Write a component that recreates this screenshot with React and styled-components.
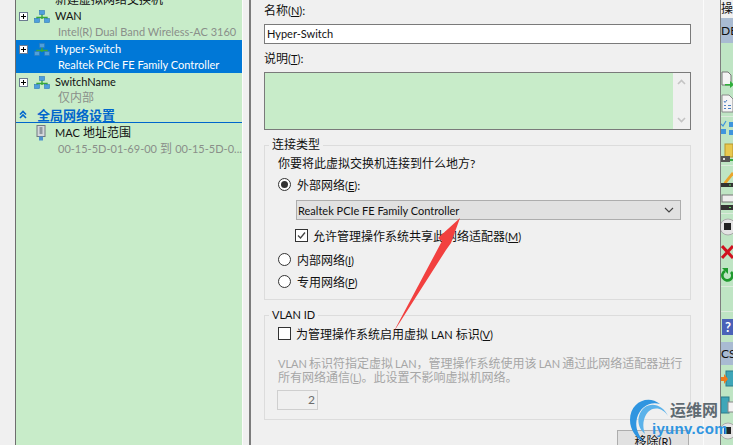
import React from 'react';
import styled, { createGlobalStyle } from 'styled-components';

const GlobalStyle = createGlobalStyle`
    html, body {
        margin: 0;
        padding: 0;
        height: 100%;
        overflow: hidden;
        background: #f0f0f0;
    }
    * {
        box-sizing: border-box;
    }
    body {
        font-family: Lato, "Noto Sans CJK SC", sans-serif;
        font-size: 12px;
        color: #111;
    }
`;

const Page = styled.div`
    position: relative;
    display: flex;
    width: 733px;
    height: 445px;
    overflow: hidden;
    background: #f0f0f0;
`;

const Lat = styled.span`
    font-size: 11px;
`;

const LeftGutter = styled.div`
    width: 15px;
    flex: none;
`;

const Tree = styled.div`
    width: 228px;
    flex: none;
    overflow: hidden;
    background: #c8ecc9;
    border-left: 1px solid #6e6e6e;
    border-right: 1px solid #fbfbfb;
`;

const TreeTop = styled.div`
    display: flex;
    align-items: center;
    height: 14px;
    margin-top: -7px;
    padding-left: 39px;
    line-height: 14px;
`;

const TreeRow = styled.div`
    height: 33px;
    padding-top: 1px;
    color: ${p => (p.$selected ? '#fff' : '#111')};
    background: ${p => (p.$selected ? '#0078d7' : 'transparent')};
`;

const RowTitle = styled.div`
    display: flex;
    align-items: center;
    height: 16px;
    line-height: 16px;
`;

const PlusBox = styled.span`
    position: relative;
    width: 9px;
    height: 9px;
    margin-left: 3px;
    flex: none;
    background: #fff;
    border: 1px solid #6b7a90;
    &::before {
        content: '';
        position: absolute;
        left: 1px;
        top: 3px;
        width: 5px;
        height: 1px;
        background: #000;
    }
    &::after {
        content: '';
        position: absolute;
        left: 3px;
        top: 1px;
        width: 1px;
        height: 5px;
        background: #000;
    }
`;

const TitleIcon = styled.svg`
    width: 16px;
    height: 13px;
    margin-left: 6px;
    margin-right: 5px;
    flex: none;
`;

const RowSub = styled.div`
    height: 15px;
    padding-left: 42px;
    line-height: 15px;
    white-space: nowrap;
    color: ${p => (p.$selected ? '#fff' : '#8a8f8a')};
`;

const SectionHeader = styled.div`
    display: flex;
    align-items: center;
    height: 17px;
    padding-left: 3px;
    font-size: 13px;
    font-weight: 700;
    color: #0066cc;
    border-bottom: 1px solid #0066cc;
`;

const SectionText = styled.span`
    margin-left: 10px;
`;

const MacRow = styled.div`
    padding-top: 2px;
`;

const MacIcon = styled.svg`
    width: 10px;
    height: 16px;
    margin-left: 20px;
    margin-right: 9px;
    flex: none;
`;

const Gap = styled.div`
    width: 6px;
    flex: none;
`;

const Panel = styled.div`
    width: 455px;
    flex: none;
    overflow: hidden;
    padding: 3px 12px 0 13px;
    border-left: 2px solid #7c7c7c;
    border-right: 1px solid #fbfbfb;
`;

const FieldLabel = styled.div`
    height: 16px;
    line-height: 16px;
    margin-top: ${p => p.$mt || 0}px;
`;

const TextInput = styled.div`
    height: 20px;
    margin-top: 5px;
    padding-left: 2px;
    font-size: 11px;
    line-height: 18px;
    background: #fff;
    border: 1px solid #7a7a7a;
`;

const Description = styled.div`
    display: flex;
    height: 58px;
    margin-top: 5px;
    background: #fff;
    border: 1px solid #7a7a7a;
`;

const DescriptionBody = styled.div`
    flex: 1;
    background: #c8ecc9;
`;

const ScrollBar = styled.div`
    display: flex;
    flex-direction: column;
    justify-content: space-between;
    align-items: center;
    width: 17px;
    padding: 6px 0;
    flex: none;
    background: #f0f0f0;
`;

const Group = styled.fieldset`
    height: ${p => p.$h}px;
    margin: 7px 0 0;
    padding: 0 0 0 13px;
    min-width: 0;
    border: 1px solid #dcdcdc;
`;

const GroupLegend = styled.legend`
    margin-left: -9px;
    padding: 0 3px;
    height: 16px;
    line-height: 16px;
`;

const Line = styled.div`
    display: flex;
    align-items: center;
    height: 16px;
    margin-top: ${p => p.$mt || 0}px;
    margin-left: ${p => p.$ml || 0}px;
    white-space: nowrap;
`;

const Radio = styled.span`
    position: relative;
    width: 13px;
    height: 13px;
    margin-right: 6px;
    flex: none;
    background: #fff;
    border: 1px solid #333;
    border-radius: 50%;
    &::after {
        content: '';
        display: ${p => (p.$checked ? 'block' : 'none')};
        position: absolute;
        left: 2px;
        top: 2px;
        width: 7px;
        height: 7px;
        background: #333;
        border-radius: 50%;
    }
`;

const Check = styled.span`
    display: flex;
    align-items: center;
    justify-content: center;
    width: 13px;
    height: 13px;
    margin-right: 5px;
    flex: none;
    background: #fff;
    border: 1px solid #333;
`;

const Combo = styled.div`
    display: flex;
    align-items: center;
    justify-content: space-between;
    width: 385px;
    height: 20px;
    margin-top: 8px;
    margin-left: 18px;
    padding: 0 6px 0 1px;
    font-size: 11px;
    background: #e1e1e1;
    border: 1px solid #adadad;
    color: #111;
`;

const HelpText = styled.div`
    margin-top: 16px;
    width: 410px;
    line-height: 14px;
    word-spacing: -1px;
    white-space: nowrap;
    color: #a6a6a6;
`;

const SpinBox = styled.div`
    width: 41px;
    height: 20px;
    margin-top: 5px;
    margin-left: -1px;
    padding-right: 2px;
    line-height: 18px;
    text-align: right;
    color: #6d6d6d;
    background: #f0f0f0;
    border: 1px solid #cfcfcf;
`;

const ButtonRow = styled.div`
    display: flex;
    justify-content: flex-end;
    margin-top: 10px;
    padding-right: 2px;
`;

const RemoveButton = styled.div`
    width: 72px;
    height: 23px;
    line-height: 21px;
    text-align: center;
    background: #e1e1e1;
    border: 1px solid #adadad;
`;

const RightGap = styled.div`
    width: 16px;
    flex: none;
`;

const Rail = styled.div`
    width: 13px;
    flex: none;
    overflow: hidden;
    border-left: 1px solid #7e7e7e;
    background: #bfe5c4;
`;

const RailTitle = styled.div`
    height: 18px;
    line-height: 18px;
    white-space: nowrap;
    background: #f0f0f0;
`;

const RailHeader = styled.div`
    height: ${p => p.$h}px;
    line-height: ${p => p.$h}px;
    font-size: 12px;
    white-space: nowrap;
    background: #a9bbd2;
`;

const RailItem = styled.div`
    display: flex;
    align-items: center;
    height: ${p => p.$h}px;
    border-bottom: ${p => (p.$line ? '1px solid #dcebdc' : 'none')};
`;

const RailIcon = styled.svg`
    width: 13px;
    height: 20px;
    flex: none;
`;

const ArrowOverlay = styled.svg`
    position: absolute;
    left: 0;
    top: 0;
    width: 733px;
    height: 445px;
    pointer-events: none;
`;

const Watermark = styled.div`
    position: absolute;
    left: 668px;
    top: 400px;
    width: 65px;
    white-space: nowrap;
`;

const WatermarkName = styled.div`
    margin-left: 2px;
    font-size: 16px;
    font-weight: 700;
    line-height: 20px;
    color: #5f6a72;
`;

const WatermarkSite = styled.div`
    margin-left: -16px;
    margin-top: 1px;
    font-family: "Liberation Sans", sans-serif;
    font-size: 15px;
    font-weight: 700;
    line-height: 16px;
    letter-spacing: 0.3px;
    color: #2f95e0;
`;

const SwirlLogo = styled.svg`
    position: absolute;
    left: 628px;
    top: 396px;
    width: 44px;
    height: 49px;
`;

const NetworkIcon = () => (
    <TitleIcon viewBox="0 0 16 13">
        <path d="M8 4V9M3 9V7.5H13V9" stroke="#3aa83a" strokeWidth="1.4" fill="none" />
        <rect x="5.5" y="0.5" width="5" height="4" fill="#4f9fdc" stroke="#2f78b8" strokeWidth="0.6" />
        <rect x="0.5" y="8.5" width="5" height="4" fill="#4f9fdc" stroke="#2f78b8" strokeWidth="0.6" />
        <rect x="10.5" y="8.5" width="5" height="4" fill="#4f9fdc" stroke="#2f78b8" strokeWidth="0.6" />
    </TitleIcon>
);

const Key = ({ c }) => <Lat>(<u>{c}</u>)</Lat>;

const treeItems = [
    { name: 'WAN', sub: <Lat>Intel(R) Dual Band Wireless-AC 3160</Lat> },
    { name: 'Hyper-Switch', sub: <Lat>Realtek PCIe FE Family Controller</Lat>, selected: true },
    { name: 'SwitchName', sub: '仅内部' },
];

const App = () => {
    return (
        <Page>
            <GlobalStyle />
            <LeftGutter />
            <Tree>
                <TreeTop>新建虚拟网络交换机</TreeTop>
                {treeItems.map(item => (
                    <TreeRow key={item.name} $selected={item.selected}>
                        <RowTitle>
                            <PlusBox />
                            <NetworkIcon />
                            <Lat>{item.name}</Lat>
                        </RowTitle>
                        <RowSub $selected={item.selected}>{item.sub}</RowSub>
                    </TreeRow>
                ))}
                <SectionHeader>
                    <svg width="8" height="9" viewBox="0 0 8 9">
                        <path d="M1 4.5L4 1.5L7 4.5M1 8L4 5L7 8" stroke="#0066cc" strokeWidth="1.6" fill="none" />
                    </svg>
                    <SectionText>全局网络设置</SectionText>
                </SectionHeader>
                <MacRow>
                    <RowTitle>
                        <MacIcon viewBox="0 0 10 16">
                            <rect x="1" y="0.5" width="8" height="11" fill="#d5d8dc" stroke="#6f7880" />
                            <rect x="3.5" y="2" width="3" height="7" fill="#8f979e" />
                            <rect x="3" y="11.5" width="4" height="4" fill="#4f93cf" />
                        </MacIcon>
                        <span><Lat>MAC</Lat> 地址范围</span>
                    </RowTitle>
                    <RowSub><Lat>00-15-5D-01-69-00</Lat> 到 <Lat>00-15-5D-0...</Lat></RowSub>
                </MacRow>
            </Tree>
            <Gap />
            <Panel>
                <FieldLabel>名称<Key c="N" />:</FieldLabel>
                <TextInput>Hyper-Switch</TextInput>
                <FieldLabel $mt={7}>说明<Key c="T" />:</FieldLabel>
                <Description>
                    <DescriptionBody />
                    <ScrollBar>
                        <svg width="9" height="6" viewBox="0 0 9 6">
                            <path d="M1 5L4.5 1.5L8 5" stroke="#c4c4c4" strokeWidth="1.6" fill="none" />
                        </svg>
                        <svg width="9" height="6" viewBox="0 0 9 6">
                            <path d="M1 1L4.5 4.5L8 1" stroke="#c4c4c4" strokeWidth="1.6" fill="none" />
                        </svg>
                    </ScrollBar>
                </Description>
                <Group $h={163}>
                    <GroupLegend>连接类型</GroupLegend>
                    <Line $mt={1}>你要将此虚拟交换机连接到什么地方?</Line>
                    <Line $mt={6}>
                        <Radio $checked />
                        <span>外部网络<Key c="E" />:</span>
                    </Line>
                    <Combo>
                        Realtek PCIe FE Family Controller
                        <svg width="10" height="6" viewBox="0 0 10 6">
                            <path d="M1 1L5 5L9 1" stroke="#444" strokeWidth="1.1" fill="none" />
                        </svg>
                    </Combo>
                    <Line $mt={7} $ml={17}>
                        <Check>
                            <svg width="11" height="11" viewBox="0 0 11 11">
                                <path d="M2 5.5L4.5 8L9 2.5" stroke="#444" strokeWidth="1.3" fill="none" />
                            </svg>
                        </Check>
                        <span>允许管理操作系统共享此网络适配器<Key c="M" /></span>
                    </Line>
                    <Line $mt={8}>
                        <Radio />
                        <span>内部网络<Key c="I" /></span>
                    </Line>
                    <Line $mt={6}>
                        <Radio />
                        <span>专用网络<Key c="P" /></span>
                    </Line>
                </Group>
                <Group $h={113}>
                    <GroupLegend><Lat>VLAN ID</Lat></GroupLegend>
                    <Line $mt={2}>
                        <Check />
                        <span>为管理操作系统启用虚拟 <Lat>LAN</Lat> 标识<Key c="V" /></span>
                    </Line>
                    <HelpText>
                        <Lat>VLAN</Lat> 标识符指定虚拟 <Lat>LAN</Lat>，管理操作系统使用该 <Lat>LAN</Lat> 通过此网络适配器进行
                        <br />
                        所有网络通信<Key c="L" />。此设置不影响虚拟机网络。
                    </HelpText>
                    <SpinBox>2</SpinBox>
                </Group>
                <ButtonRow>
                    <RemoveButton>移除<Key c="R" /></RemoveButton>
                </ButtonRow>
            </Panel>
            <RightGap />
            <Rail>
                <RailTitle>操作</RailTitle>
                <RailHeader $h={25}>DESKTOP</RailHeader>
                <RailItem $h={25} />
                <RailItem $h={22}>
                    <RailIcon viewBox="0 0 13 20">
                        <path d="M1 3H7L10 6V16H1Z" fill="#f4f4f4" stroke="#777" />
                        <path d="M4 15H9V12L13 15.5L9 19V16.5H4Z" fill="#2fae3a" />
                    </RailIcon>
                </RailItem>
                <RailItem $h={27} $line>
                    <RailIcon viewBox="0 0 13 20">
                        <path d="M1 2H8L12 6V19H1Z" fill="#f4f4f4" stroke="#8a8a8a" />
                        <path d="M3 8L4 9.5L6 7M3 12.5H5M7 12.5H10M3 15.5H5M7 15.5H10" stroke="#4b7fc0" fill="none" />
                    </RailIcon>
                </RailItem>
                <RailItem $h={23}>
                    <RailIcon viewBox="0 0 13 20">
                        <rect x="0" y="10" width="5" height="5" fill="#3f95dd" />
                        <rect x="8" y="3" width="5" height="5" fill="#3f95dd" />
                        <rect x="8" y="11" width="5" height="5" fill="#3f95dd" />
                        <path d="M0 5L2 7L5 2" stroke="#3f95dd" strokeWidth="1.2" fill="none" />
                    </RailIcon>
                </RailItem>
                <RailItem $h={26} $line>
                    <RailIcon viewBox="0 0 13 20">
                        <rect x="4" y="1" width="8" height="13" fill="#e8c84f" stroke="#b8952d" />
                        <rect x="0" y="13" width="9" height="6" fill="#555" />
                        <rect x="2" y="15" width="2" height="2" fill="#ddd" />
                        <path d="M9 17H13" stroke="#37a83f" strokeWidth="2" />
                    </RailIcon>
                </RailItem>
                <RailItem $h={24}>
                    <RailIcon viewBox="0 0 13 20">
                        <path d="M3 14L11 4L13 6L5 16L2 17Z" fill="#e9a52c" />
                        <rect x="0" y="15" width="12" height="4" fill="#333" />
                        <rect x="8" y="16.5" width="2" height="1" fill="#5fe05f" />
                    </RailIcon>
                </RailItem>
                <RailItem $h={24} $line>
                    <RailIcon viewBox="0 0 13 20">
                        <rect x="1" y="3" width="12" height="7" fill="#eee" stroke="#777" />
                        <rect x="0" y="13" width="13" height="5" fill="#333" />
                        <rect x="8" y="15" width="2" height="1" fill="#5fe05f" />
                    </RailIcon>
                </RailItem>
                <RailItem $h={26}>
                    <RailIcon viewBox="0 0 13 20">
                        <circle cx="7" cy="10" r="8" fill="#e4e4e4" stroke="#aaa" />
                        <rect x="3" y="6" width="7" height="7" fill="#222" />
                    </RailIcon>
                </RailItem>
                <RailItem $h={23}>
                    <RailIcon viewBox="0 0 13 20">
                        <path d="M1 4L12 16M12 4L1 16" stroke="#d0121f" strokeWidth="3" />
                    </RailIcon>
                </RailItem>
                <RailItem $h={24} $line>
                    <RailIcon viewBox="0 0 13 20">
                        <path d="M10 7A5 5 0 1 1 4 6" stroke="#1f9a2e" strokeWidth="2.6" fill="none" />
                        <path d="M1 3H7V9Z" fill="#1f9a2e" />
                    </RailIcon>
                </RailItem>
                <RailItem $h={25} $line />
                <RailItem $h={30}>
                    <RailIcon viewBox="0 0 13 20">
                        <rect x="1" y="2" width="12" height="16" fill="#4a62b8" />
                        <text x="7" y="15" textAnchor="middle" fontSize="13" fontWeight="700" fill="#fff">?</text>
                    </RailIcon>
                </RailItem>
                <RailHeader $h={23}>CS</RailHeader>
                <RailItem $h={27}>
                    <RailIcon viewBox="0 0 13 20">
                        <rect x="5" y="2" width="8" height="15" fill="#3ea6b8" stroke="#2a7a8a" />
                        <path d="M0 8H3V5L7 10L3 15V12H0Z" fill="#ef7a1d" />
                    </RailIcon>
                </RailItem>
                <RailItem $h={25}>
                    <RailIcon viewBox="0 0 13 20">
                        <rect x="0" y="2" width="8" height="16" fill="#3ea6b8" stroke="#2a7a8a" />
                        <rect x="7" y="7" width="6" height="10" fill="#f2f2f2" stroke="#888" />
                    </RailIcon>
                </RailItem>
                <RailItem $h={28}>
                    <RailIcon viewBox="0 0 13 20">
                        <circle cx="7" cy="10" r="8" fill="#e4e4e4" stroke="#aaa" />
                        <rect x="3" y="6" width="7" height="7" fill="#222" />
                    </RailIcon>
                </RailItem>
            </Rail>
            <ArrowOverlay viewBox="0 0 733 445">
                <polygon points="460,218 438,238 442,241 393,333 446,250 451,243" fill="#f2403f" />
            </ArrowOverlay>
            <SwirlLogo viewBox="0 0 44 49">
                <path d="M32 8C20 -2 2 6 2 24C2 34 8 42 16 46C9 38 7 30 9 22C12 11 22 5 32 8Z" fill="#2f95e0" />
                <path d="M40 20C34 6 16 4 11 20C9 27 12 34 17 38C14 30 15 22 20 16C26 10 35 12 40 20Z" fill="#5bb2ea" />
            </SwirlLogo>
            <Watermark>
                <WatermarkName>运维网</WatermarkName>
                <WatermarkSite>iyunv.com</WatermarkSite>
            </Watermark>
        </Page>
    );
};

export default App;
